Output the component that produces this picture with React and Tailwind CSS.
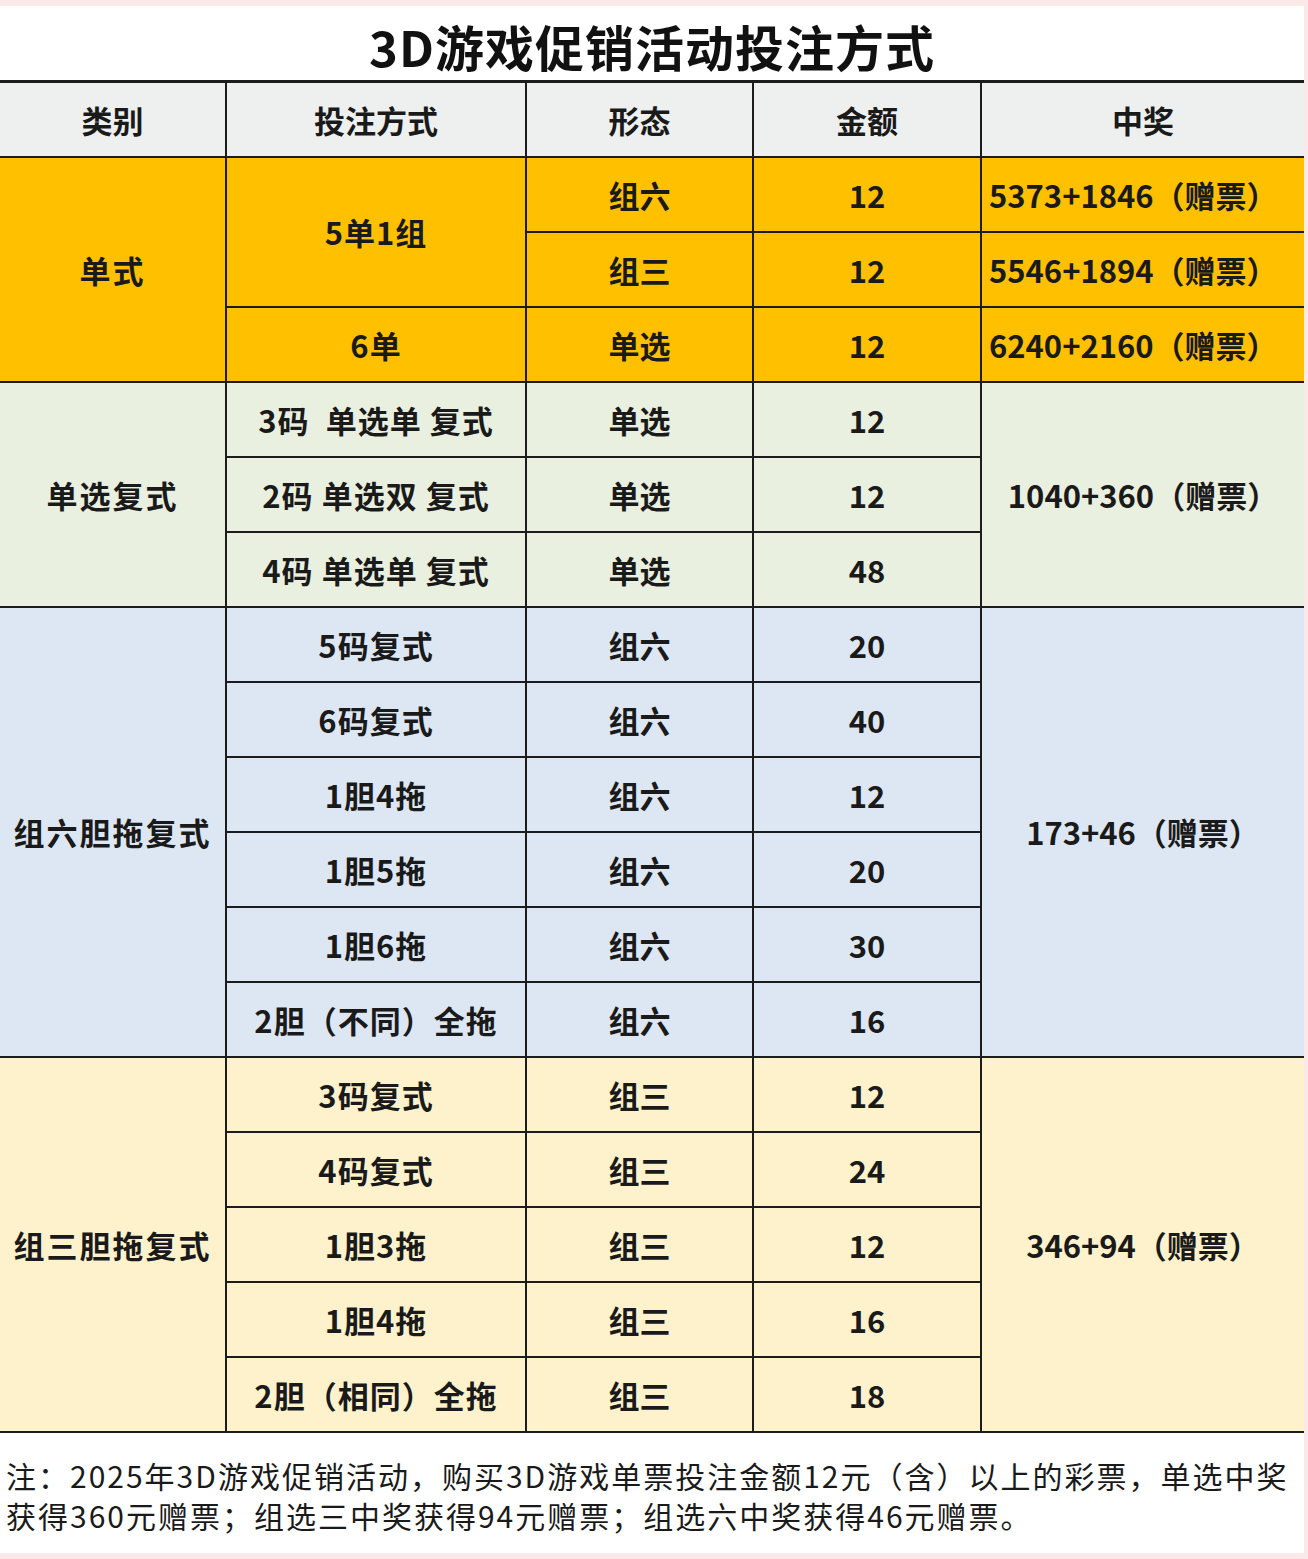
const groups = [
  {
    name: '单式',
    bg: 'bg-[#ffc000]',
    rows: [
      { way: '5单1组', waySpan: 2, form: '组六', amt: '12', prize: '5373+1846（赠票）' },
      { form: '组三', amt: '12', prize: '5546+1894（赠票）' },
      { way: '6单', form: '单选', amt: '12', prize: '6240+2160（赠票）' },
    ],
  },
  {
    name: '单选复式',
    bg: 'bg-[#eaf0df]',
    prize: '1040+360（赠票）',
    rows: [
      { way: '3码  单选单 复式', form: '单选', amt: '12' },
      { way: '2码 单选双 复式', form: '单选', amt: '12' },
      { way: '4码 单选单 复式', form: '单选', amt: '48' },
    ],
  },
  {
    name: '组六胆拖复式',
    bg: 'bg-[#dde7f3]',
    prize: '173+46（赠票）',
    rows: [
      { way: '5码复式', form: '组六', amt: '20' },
      { way: '6码复式', form: '组六', amt: '40' },
      { way: '1胆4拖', form: '组六', amt: '12' },
      { way: '1胆5拖', form: '组六', amt: '20' },
      { way: '1胆6拖', form: '组六', amt: '30' },
      { way: '2胆（不同）全拖', form: '组六', amt: '16' },
    ],
  },
  {
    name: '组三胆拖复式',
    bg: 'bg-[#fef2cd]',
    prize: '346+94（赠票）',
    rows: [
      { way: '3码复式', form: '组三', amt: '12' },
      { way: '4码复式', form: '组三', amt: '24' },
      { way: '1胆3拖', form: '组三', amt: '12' },
      { way: '1胆4拖', form: '组三', amt: '16' },
      { way: '2胆（相同）全拖', form: '组三', amt: '18' },
    ],
  },
]

const td = 'border-2 border-[#1c1c1c] text-center align-middle whitespace-pre'

export default function App() {
  return (
    <div className="w-[1308px] h-[1559px] bg-[#fbe8e9] pt-[6px] pr-[4px] pb-[6px]" style={{ fontFamily: '"Noto Sans CJK SC", "Noto Sans", sans-serif' }}>
      <div className="bg-white h-full flex flex-col">
        {/* title */}
        <div className="h-[74px] flex items-center justify-center text-[49px] font-bold text-[#111] tracking-[1px] leading-none pt-[4px]">
          3D游戏促销活动投注方式
        </div>

        <table className="w-[1304px] table-fixed border-collapse text-[31px] font-bold text-[#1a1a1a] leading-none">
          <colgroup>
            <col className="w-[226px]" />
            <col className="w-[300px]" />
            <col className="w-[227px]" />
            <col className="w-[228px]" />
            <col className="w-[323px]" />
          </colgroup>
          <thead>
            <tr className="h-[75px] bg-[#eef0ef]">
              {['类别', '投注方式', '形态', '金额', '中奖'].map((h, i) => (
                <th key={h} className={`${td} border-t-[3px] ${i === 0 ? 'border-l-0' : ''} ${i === 4 ? 'border-r-0' : ''} font-bold`}>
                  {h}
                </th>
              ))}
            </tr>
          </thead>
          <tbody>
            {groups.map(g =>
              g.rows.map((r, i) => (
                <tr key={g.name + i} className={`h-[75px] ${g.bg}`}>
                  {i === 0 && (
                    <td rowSpan={g.rows.length} className={`${td} border-l-0 tracking-[2px]`}>{g.name}</td>
                  )}
                  {r.way && <td rowSpan={r.waySpan || 1} className={`${td} tracking-[1px]`}>{r.way}</td>}
                  <td className={td}>{r.form}</td>
                  <td className={td}>{r.amt}</td>
                  {r.prize && (
                    <td className={`${td} border-r-0 text-left pl-[7px] font-semibold`}>{r.prize}</td>
                  )}
                  {!r.prize && i === 0 && (
                    <td rowSpan={g.rows.length} className={`${td} border-r-0 font-semibold`}>{g.prize}</td>
                  )}
                </tr>
              ))
            )}
          </tbody>
        </table>

        {/* note */}
        <div className="flex-1 pt-[22px] pl-[6px] pr-[6px] text-[30px] text-[#1a1a1a] leading-[40px] tracking-[2px] whitespace-nowrap">
          <p>注：2025年3D游戏促销活动，购买3D游戏单票投注金额12元（含）以上的彩票，单选中奖</p>
          <p>获得360元赠票；组选三中奖获得94元赠票；组选六中奖获得46元赠票。</p>
        </div>
      </div>
    </div>
  )
}
